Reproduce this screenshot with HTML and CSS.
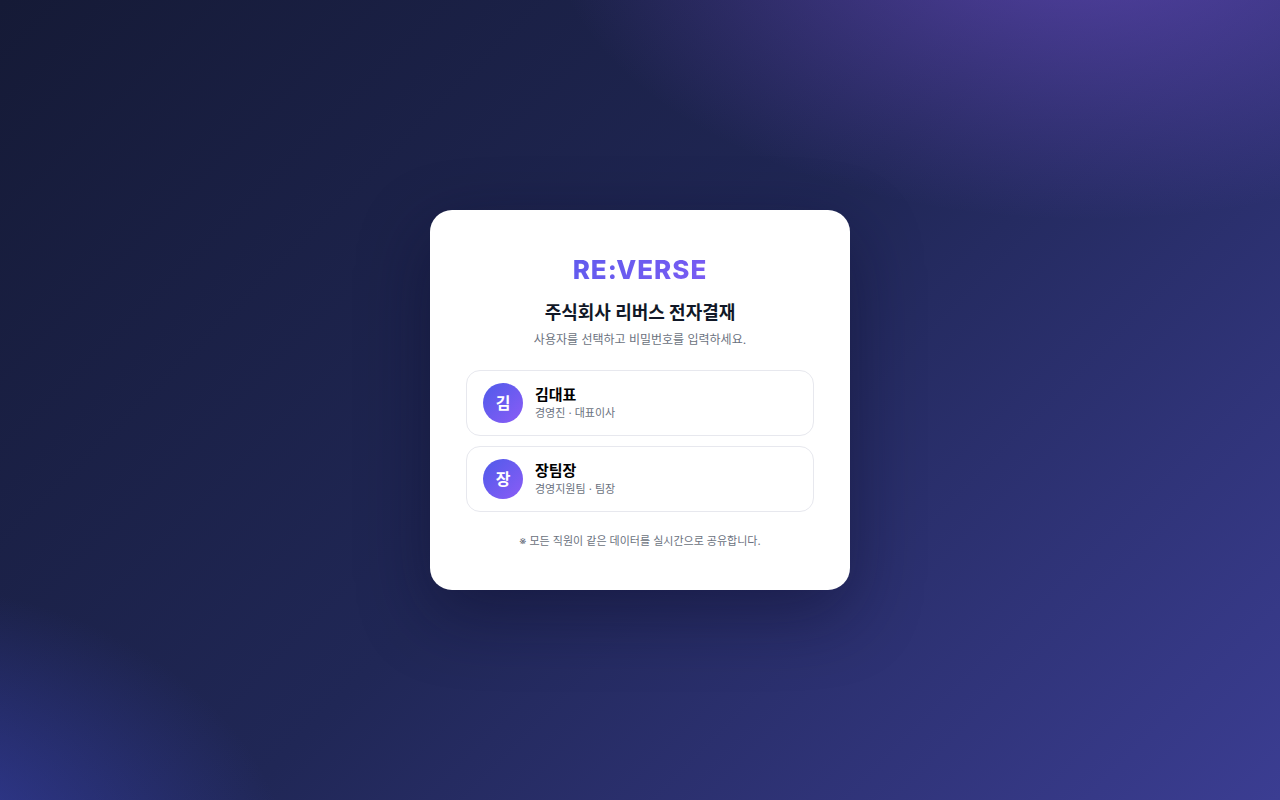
FILE: index.html
```html
<!DOCTYPE html>
<html lang="ko">
<head>
    <meta charset="UTF-8">
    <meta name="viewport" content="width=device-width, initial-scale=1.0">
    <title>RE:VERSE 전자결재</title>
    <link rel="stylesheet" href="styles.css">
</head>
<body>
    <main class="login-screen">
        <div class="login-card">
            <div class="brand">RE:VERSE</div>
            <h1>주식회사 리버스 전자결재</h1>
            <p class="sub">사용자를 선택하고 비밀번호를 입력하세요.</p>
            <!-- 사용자 목록 -->
            <div class="user-list">
                <button type="button" class="user-pick">
                    <span class="avatar">김</span>
                    <span class="user-info">
                        <span class="user-name">김대표</span>
                        <span class="user-role">경영진 · 대표이사</span>
                    </span>
                </button>
                <button type="button" class="user-pick">
                    <span class="avatar">장</span>
                    <span class="user-info">
                        <span class="user-name">장팀장</span>
                        <span class="user-role">경영지원팀 · 팀장</span>
                    </span>
                </button>
            </div>
            <p class="hint">※ 모든 직원이 같은 데이터를 실시간으로 공유합니다.</p>
        </div>
    </main>
</body>
</html>
```
FILE: styles.css
```css
* {
    box-sizing: border-box;
}
body {
    margin: 0;
    font-family: Inter, "Noto Sans CJK KR", sans-serif;
    font-size: 14px;
    line-height: 1.5;
    color: #111827;
}
.login-screen {
    min-height: 100vh;
    display: flex;
    align-items: center;
    justify-content: center;
    padding: 20px;
    background:
        radial-gradient(900px 500px at 85% -10%, rgba(139, 92, 246, 0.5), transparent 60%),
        radial-gradient(700px 500px at -10% 110%, rgba(79, 91, 255, 0.5), transparent 60%),
        linear-gradient(135deg, #151a36 0%, #202756 50%, #3b3d92 100%);
}
.login-card {
    width: 100%;
    max-width: 420px;
    padding: 40px 36px;
    background: #fff;
    border-radius: 22px;
    box-shadow: 0 24px 70px rgba(10, 10, 40, 0.45);
    text-align: center;
}
.brand {
    font-size: 26px;
    font-weight: 800;
    letter-spacing: 1px;
    background: linear-gradient(135deg, #4f5bea, #8b5cf6);
    -webkit-background-clip: text;
    background-clip: text;
    color: transparent;
}
h1 {
    margin: 10px 0 4px;
    font-size: 18px;
    font-weight: 700;
}
.sub {
    margin: 0 0 20px;
    font-size: 12px;
    line-height: 20px;
    color: #6b7280;
}
.user-list {
    display: grid;
    gap: 10px;
}
.user-pick {
    display: flex;
    align-items: center;
    gap: 12px;
    width: 100%;
    padding: 12px 16px;
    border: 1px solid #e7e8ee;
    border-radius: 14px;
    background: #fff;
    color: #000;
    font: inherit;
    text-align: left;
    cursor: pointer;
}
.user-pick:hover {
    border-color: #6366f1;
}
.avatar {
    display: flex;
    align-items: center;
    justify-content: center;
    width: 40px;
    height: 40px;
    border-radius: 50%;
    background: linear-gradient(135deg, #4f5bea, #8b5cf6);
    color: #fff;
    font-size: 16px;
    font-weight: 700;
}
.user-name,
.user-role {
    display: block;
}
.user-name {
    font-size: 15px;
    font-weight: 700;
    line-height: 20px;
}
.user-role {
    font-size: 11px;
    line-height: 16px;
    color: #6b7280;
}
.hint {
    margin: 20px 0 0;
    font-size: 11px;
    line-height: 18px;
    color: #6b7280;
}
```
